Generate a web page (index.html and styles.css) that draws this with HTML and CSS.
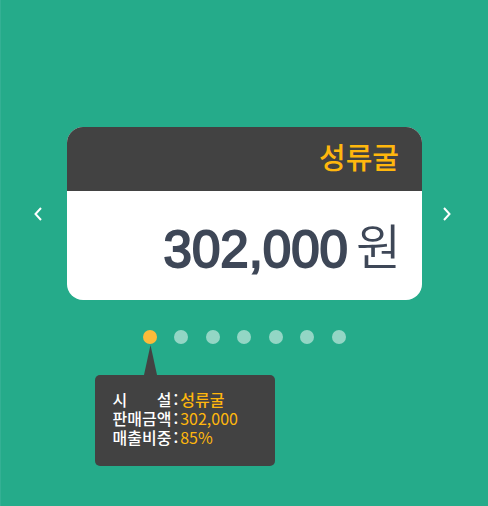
FILE: index.html
```html
<!DOCTYPE html>
<html lang="ko">
<head>
<meta charset="utf-8">
<meta name="viewport" content="width=device-width, initial-scale=1">
<title>성류굴</title>
<link rel="stylesheet" href="styles.css">
</head>
<body>
<main class="carousel">
  <div class="stage">
    <button class="arrow" type="button" aria-label="이전">
      <svg width="8" height="14" viewBox="0 0 8 14"><path d="M7 1L1.500 7L7 13"/></svg>
    </button>
    <article class="card">
      <h1 class="card-title">성류굴</h1>
      <p class="card-amount"><strong>302,000</strong><span>원</span></p>
    </article>
    <button class="arrow" type="button" aria-label="다음">
      <svg width="8" height="14" viewBox="0 0 8 14"><path d="M1 1L6.500 7L1 13"/></svg>
    </button>
  </div>
  <nav class="dots">
    <div class="dot-item">
      <button class="dot dot-active" type="button" aria-label="1"></button>
      <div class="tooltip">
        <svg class="tail" width="13" height="30" viewBox="0 0 13 30"><path d="M6.500 0L13 30H0Z"/></svg>
        <dl class="facts">
          <dt><span>시</span><span>설</span></dt><dd>성류굴</dd>
          <dt>판매금액</dt><dd class="number">302,000</dd>
          <dt>매출비중</dt><dd class="number">85%</dd>
        </dl>
      </div>
    </div>
    <button class="dot" type="button" aria-label="2"></button>
    <button class="dot" type="button" aria-label="3"></button>
    <button class="dot" type="button" aria-label="4"></button>
    <button class="dot" type="button" aria-label="5"></button>
    <button class="dot" type="button" aria-label="6"></button>
    <button class="dot" type="button" aria-label="7"></button>
  </nav>
</main>
</body>
</html>
```
FILE: styles.css
```css
* {
  box-sizing: border-box;
}

body {
  margin: 0;
  min-height: 100vh;
  background: #25ab8a;
  font-family: "Noto Sans CJK KR", sans-serif;
}

.carousel {
  min-height: 100vh;
  padding-top: 127px;
  box-shadow: inset 1px 0 #34b094;
}

.stage {
  display: grid;
  grid-template-columns: 67px 1fr 66px;
}

.arrow {
  display: flex;
  align-items: center;
  justify-content: center;
  padding: 0 0 0 8px;
  border: 0;
  background: none;
  cursor: pointer;
}

.arrow:last-child {
  padding: 0 16px 0 0;
}

.arrow svg {
  fill: none;
  stroke: #fff;
  stroke-width: 2;
}

.card {
  overflow: hidden;
  border-radius: 16px;
  background: #fff;
}

.card-title {
  margin: 0;
  padding: 0 23px 6px;
  background: #424242;
  color: #ffb70d;
  font-size: 29px;
  font-weight: 500;
  line-height: 58px;
  text-align: right;
}

.card-amount {
  display: flex;
  justify-content: flex-end;
  gap: 8px;
  margin: 0;
  padding: 0 21px 4px;
  color: #3e4757;
  font-size: 49px;
  line-height: 105px;
}

.card-amount strong {
  padding-top: 6px;
  margin-bottom: -6px;
  font-family: "Liberation Sans", sans-serif;
  font-size: 51px;
  font-weight: 400;
  -webkit-text-stroke: 2px #3e4757;
}

.card-amount span {
  font-weight: 350;
}

.dots {
  display: flex;
  justify-content: space-between;
  width: 203px;
  margin: 30px auto 0;
}

.dot-item {
  position: relative;
  display: flex;
}

.dot {
  width: 14px;
  height: 14px;
  padding: 0;
  border: 0;
  border-radius: 50%;
  background: #93d6c5;
  cursor: pointer;
}

.dot-active {
  background: #fdbb3a;
}

.tooltip {
  position: absolute;
  top: 45px;
  left: -48px;
  width: 180px;
  padding: 15px 18px 19px;
  border-radius: 5px;
  background: #424242;
}

.tail {
  position: absolute;
  bottom: 100%;
  left: 49px;
  fill: #424242;
}

.facts {
  display: grid;
  grid-template-columns: max-content 1fr;
  margin: 0;
  font-size: 16px;
  font-weight: 500;
  line-height: 19px;
}

.facts dt {
  display: flex;
  justify-content: space-between;
  color: #fff;
}

.facts dt::after {
  content: ":";
  margin: 0 2px;
}

.facts dt span:first-child {
  flex: 1;
}

.facts dd {
  margin: 0;
  color: #ffb70d;
}

.facts .number {
  font-weight: 400;
}
```
